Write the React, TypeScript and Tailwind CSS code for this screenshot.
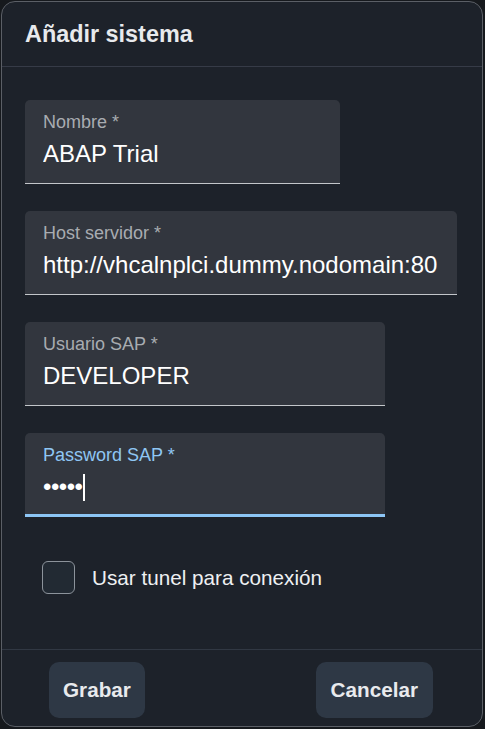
import React from "react";

const font = { fontFamily: '"Liberation Sans", Arial, sans-serif' };

function Field({
  label,
  value,
  width,
  focused,
  children,
}: {
  label: string;
  value?: string;
  width: string;
  focused?: boolean;
  children?: React.ReactNode;
}) {
  return (
    <div
      className={`${width} h-[84px] bg-[#32363e] rounded-t-[5px] pt-[10px] pl-[18px] pr-[10px] flex flex-col ${
        focused ? "border-b-[3px] border-[#8dc6f5]" : "border-b border-[#c3c6ca]"
      }`}
    >
      <div
        className={`text-[18px] leading-[24px] whitespace-nowrap ${
          focused ? "text-[#8fc6f3]" : "text-[#a8acb1]"
        }`}
      >
        {label}
      </div>
      <div className="mt-[4px] h-[32px] text-[24px] leading-[32px] text-white whitespace-nowrap overflow-hidden">
        {children ?? value}
      </div>
    </div>
  );
}

export default function App() {
  return (
    <div className="w-[485px] h-[729px] bg-[#16191d] pt-[1px] pl-[1px]" style={font}>
      <div className="w-[482px] h-[726px] bg-[#1d222a] border border-[#5b5f66] rounded-[14px] flex flex-col overflow-hidden">
        <div className="h-[65px] flex items-center pl-[23px] border-b border-[#363b47] shrink-0">
          <h1 className="text-[23.4px] leading-[32px] font-bold text-[#e8eaed]">Añadir sistema</h1>
        </div>
        <div className="flex-1 pt-[33px] pl-[23px] flex flex-col gap-[27px]">
          <Field label="Nombre *" value="ABAP Trial" width="w-[315px]" />
          <Field label="Host servidor *" value="http://vhcalnplci.dummy.nodomain:80" width="w-[432px]" />
          <Field label="Usuario SAP *" value="DEVELOPER" width="w-[360px]" />
          <Field label="Password SAP *" width="w-[360px]" focused>
            <span className="inline-flex items-center h-[32px]">
              <span className="tracking-[-0.5px]">•••••</span>
              <span className="inline-block w-[2px] h-[27px] bg-white ml-[0px]" />
            </span>
          </Field>
          <label className="mt-[17px] pl-[17px] flex items-center gap-[17px]">
            <span className="w-[33px] h-[33px] rounded-[6px] border border-[#8c939b] bg-[#222a33] shrink-0" />
            <span className="text-[20.7px] leading-[28px] text-[#eef0f2]">Usar tunel para conexión</span>
          </label>
        </div>
        <div className="h-[77px] shrink-0 border-t border-[#313843] pt-[12px] pl-[47px] pr-[49px] flex justify-between items-start">
          <button className="h-[56px] px-[14px] rounded-[10px] bg-[#2e3845] text-[20.7px] font-bold text-[#e8eaed]">
            Grabar
          </button>
          <button className="h-[56px] px-[15px] rounded-[10px] bg-[#2e3845] text-[20.7px] font-bold text-[#e8eaed]">
            Cancelar
          </button>
        </div>
      </div>
    </div>
  );
}
